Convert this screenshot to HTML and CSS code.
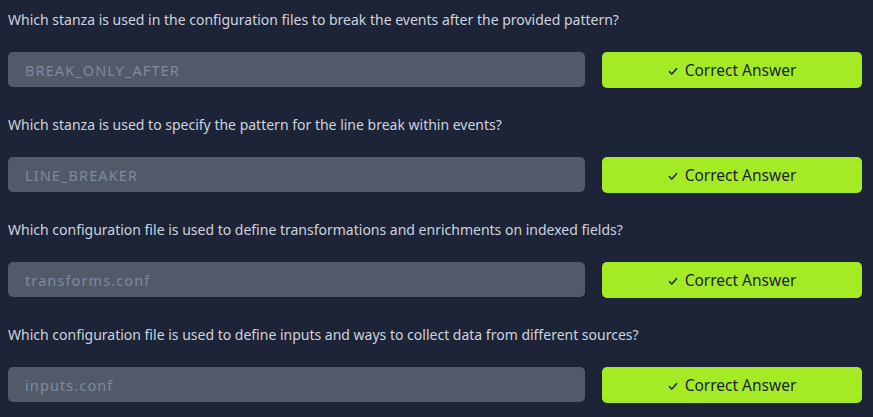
FILE: index.html
```html
<!DOCTYPE html>
<html lang="en">
<head>
<meta charset="utf-8">
<title>Questions</title>
<link rel="stylesheet" href="styles.css">
</head>
<body>
<div class="list">
  <div class="qa">
    <p class="question">Which stanza is used in the configuration files to break the events after the provided pattern?</p>
    <div class="row">
      <div class="answer">BREAK_ONLY_AFTER</div>
      <button class="btn"><svg class="check" viewBox="0 0 10 8" width="10" height="8"><path d="M1 4.2 L3.8 7 L9 1.2" fill="none" stroke="currentColor" stroke-width="1.5"/></svg>Correct Answer</button>
    </div>
  </div>
  <div class="qa">
    <p class="question">Which stanza is used to specify the pattern for the line break within events?</p>
    <div class="row">
      <div class="answer">LINE_BREAKER</div>
      <button class="btn"><svg class="check" viewBox="0 0 10 8" width="10" height="8"><path d="M1 4.2 L3.8 7 L9 1.2" fill="none" stroke="currentColor" stroke-width="1.5"/></svg>Correct Answer</button>
    </div>
  </div>
  <div class="qa">
    <p class="question">Which configuration file is used to define transformations and enrichments on indexed fields?</p>
    <div class="row">
      <div class="answer">transforms.conf</div>
      <button class="btn"><svg class="check" viewBox="0 0 10 8" width="10" height="8"><path d="M1 4.2 L3.8 7 L9 1.2" fill="none" stroke="currentColor" stroke-width="1.5"/></svg>Correct Answer</button>
    </div>
  </div>
  <div class="qa">
    <p class="question">Which configuration file is used to define inputs and ways to collect data from different sources?</p>
    <div class="row">
      <div class="answer">inputs.conf</div>
      <button class="btn"><svg class="check" viewBox="0 0 10 8" width="10" height="8"><path d="M1 4.2 L3.8 7 L9 1.2" fill="none" stroke="currentColor" stroke-width="1.5"/></svg>Correct Answer</button>
    </div>
  </div>
</div>
</body>
</html>
```
FILE: styles.css
```css
html, body {
  margin: 0;
  padding: 0;
  background: #1d2438;
  height: 100%;
  overflow: hidden;
}
.list {
  padding: 10px 11px 0 8px;
}
.qa {
  height: 105px;
}
.question {
  margin: 0 0 22px 0;
  font-family: "Noto Sans", sans-serif;
  font-size: 14px;
  line-height: 20px;
  color: #cdd3df;
  white-space: nowrap;
}
.row {
  display: flex;
  gap: 17px;
  height: 35px;
}
.answer {
  flex: 1;
  background: #525a6a;
  border-radius: 5px;
  padding-left: 17px;
  display: flex;
  align-items: center;
  font-family: "Noto Sans", sans-serif;
  font-size: 14.5px;
  letter-spacing: 1.1px;
  color: #7e899d;
}
.btn {
  width: 260px;
  height: 36px;
  border: none;
  border-radius: 5px;
  background: #a4eb26;
  color: #1d2438;
  font-family: "Noto Sans", sans-serif;
  font-size: 15.5px;
  display: flex;
  align-items: center;
  justify-content: center;
  gap: 7px;
  padding: 0;
}
.check {
  margin-top: 1px;
}
```
